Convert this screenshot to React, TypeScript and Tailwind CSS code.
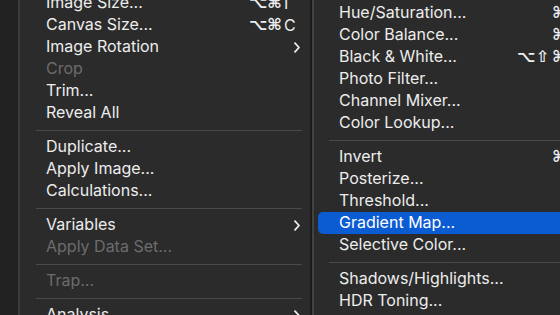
import React from 'react'

type Item =
  | { kind: 'sep' }
  | { kind: 'item'; label: string; mods?: string[]; keyChar?: string; sub?: boolean; disabled?: boolean; active?: boolean }

const leftItems: Item[] = [
  { kind: 'item', label: 'Image Size...', mods: ['⌥', '⌘'], keyChar: 'I' },
  { kind: 'item', label: 'Canvas Size...', mods: ['⌥', '⌘'], keyChar: 'C' },
  { kind: 'item', label: 'Image Rotation', sub: true },
  { kind: 'item', label: 'Crop', disabled: true },
  { kind: 'item', label: 'Trim...' },
  { kind: 'item', label: 'Reveal All' },
  { kind: 'sep' },
  { kind: 'item', label: 'Duplicate...' },
  { kind: 'item', label: 'Apply Image...' },
  { kind: 'item', label: 'Calculations...' },
  { kind: 'sep' },
  { kind: 'item', label: 'Variables', sub: true },
  { kind: 'item', label: 'Apply Data Set...', disabled: true },
  { kind: 'sep' },
  { kind: 'item', label: 'Trap...', disabled: true },
  { kind: 'sep' },
  { kind: 'item', label: 'Analysis', sub: true },
]

const rightItems: Item[] = [
  { kind: 'item', label: 'Hue/Saturation...', mods: ['⌘'], keyChar: 'U' },
  { kind: 'item', label: 'Color Balance...', mods: ['⌘'], keyChar: 'B' },
  { kind: 'item', label: 'Black & White...', mods: ['⌥', '⇧', '⌘'], keyChar: 'B' },
  { kind: 'item', label: 'Photo Filter...' },
  { kind: 'item', label: 'Channel Mixer...' },
  { kind: 'item', label: 'Color Lookup...' },
  { kind: 'sep' },
  { kind: 'item', label: 'Invert', mods: ['⌘'], keyChar: 'I' },
  { kind: 'item', label: 'Posterize...' },
  { kind: 'item', label: 'Threshold...' },
  { kind: 'item', label: 'Gradient Map...', active: true },
  { kind: 'item', label: 'Selective Color...' },
  { kind: 'sep' },
  { kind: 'item', label: 'Shadows/Highlights...' },
  { kind: 'item', label: 'HDR Toning...' },
]

function Chevron() {
  return (
    <svg width="6" height="11" viewBox="0 0 6 11" fill="none" stroke="currentColor" strokeWidth={1.8} strokeLinecap="round" strokeLinejoin="round">
      <path d="M1 1.2l4 4.3-4 4.3" />
    </svg>
  )
}

function Shortcut({ mods, keyChar }: { mods: string[]; keyChar: string }) {
  return (
    <div className="flex items-center">
      {mods.map((m, i) => (
        <span key={i} className="w-[17px] text-center text-[16px] leading-none font-['DejaVu_Sans',sans-serif] font-bold">
          {m}
        </span>
      ))}
      <span className="w-[17px] pl-[1px] text-left">{keyChar}</span>
    </div>
  )
}

function MenuRows({ items, side }: { items: Item[]; side: 'left' | 'right' }) {
  return (
    <>
      {items.map((it, i) => {
        if (it.kind === 'sep') {
          return (
            <div key={i} className={side === 'left' ? 'h-[12px] flex items-center ml-[16px] mr-[8px]' : 'h-[12px] flex items-center ml-[15px]'}>
              <div className="h-px w-full bg-[#4a4a4a]" />
            </div>
          )
        }
        return (
          <div
            key={i}
            className={`flex items-center h-[22px] rounded-[5px] ${
              side === 'left' ? 'mx-[5px] pl-[21px] pr-[5px]' : 'ml-[4px] mr-[4px] pl-[21px] pr-[23px]'
            } ${it.active ? 'bg-[#0b5bd3] text-white' : it.disabled ? 'text-[#6c6c6c]' : 'text-[#ededed]'}`}
          >
            <span className="flex-1 whitespace-nowrap -mt-[2px]">{it.label}</span>
            {it.mods && it.keyChar && <Shortcut mods={it.mods} keyChar={it.keyChar} />}
            {it.sub && (
              <span className="w-[17px] flex justify-end">
                <Chevron />
              </span>
            )}
          </div>
        )
      })}
    </>
  )
}

export default function App() {
  return (
    <div className="w-[560px] h-[315px] overflow-hidden bg-[#212121] flex font-['Inter',sans-serif] text-[16px]">
      {/* outer gutter */}
      <div className="w-[18px] shrink-0" />

      {/* Image menu */}
      <div className="w-[294px] shrink-0 bg-[#2b2b2b] border-l-2 border-l-[#3b3b3b] border-r-2 border-r-[#1a1a1a]">
        <div className="-mt-[8px]">
          <MenuRows items={leftItems} side="left" />
        </div>
      </div>

      {/* Adjustments submenu */}
      <div className="w-[300px] shrink-0 bg-[#2b2b2b] border-l-2 border-l-[#424242]">
        <div className="mt-[2px]">
          <MenuRows items={rightItems} side="right" />
        </div>
      </div>
    </div>
  )
}
